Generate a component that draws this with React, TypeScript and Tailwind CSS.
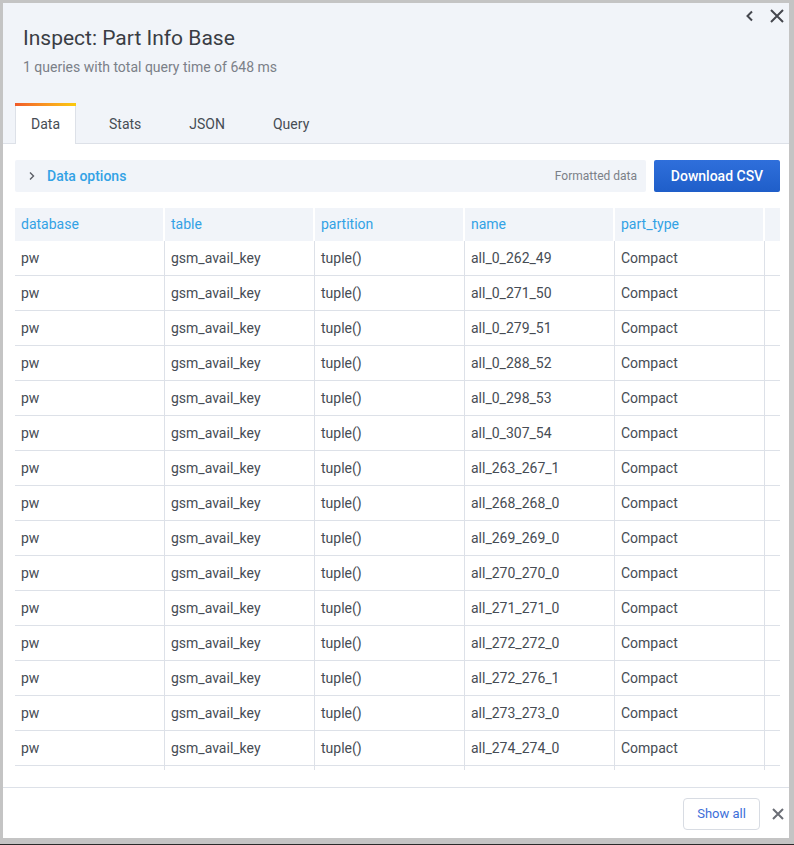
import React from "react";

const names = [
  "all_0_262_49",
  "all_0_271_50",
  "all_0_279_51",
  "all_0_288_52",
  "all_0_298_53",
  "all_0_307_54",
  "all_263_267_1",
  "all_268_268_0",
  "all_269_269_0",
  "all_270_270_0",
  "all_271_271_0",
  "all_272_272_0",
  "all_272_276_1",
  "all_273_273_0",
  "all_274_274_0",
];

const headers = ["database", "table", "partition", "name", "part_type"];

export default function App() {
  return (
    <div
      className="w-[794px] h-[845px] bg-[#c4c4c4] flex flex-col"
      style={{ fontFamily: "Roboto, 'Liberation Sans', sans-serif" }}
    >
      <div className="flex-1 pl-[3px] pt-[3px] pr-[5px] pb-[6px] flex">
        <div className="flex-1 flex flex-col bg-white">
          {/* header */}
          <div className="bg-[#f1f4f9] relative">
            <div className="absolute right-[3px] top-[4px] flex items-center gap-[10px] text-[#45474e]">
              <svg width="16" height="16" viewBox="0 0 16 16">
                <path d="M10 3.5 L5.5 8 L10 12.5" fill="none" stroke="currentColor" strokeWidth="2" />
              </svg>
              <svg width="18" height="18" viewBox="0 0 18 18">
                <path d="M3 3 L15 15 M15 3 L3 15" fill="none" stroke="currentColor" strokeWidth="2" />
              </svg>
            </div>
            <div className="pl-[20px] pt-[22px]">
              <div className="text-[21px] leading-[26px] text-[#3a3d44]">Inspect: Part Info Base</div>
              <div className="text-[14px] leading-[20px] mt-[6px] text-[#7b8088]">
                1 queries with total query time of 648 ms
              </div>
            </div>
            <div className="flex items-end pl-[12px] mt-[26px] border-b border-[#dde1e8] h-[41px]">
              <div className="relative h-[41px] -mb-px bg-white border-x border-[#dde1e8] px-[15px] flex items-center text-[14px] text-[#464c54]">
                <div className="absolute left-[-1px] right-[-1px] top-0 h-[3px] bg-gradient-to-r from-[#f05a28] to-[#fbca0a]" />
                <span className="pt-[2px]">Data</span>
              </div>
              <div className="h-[40px] px-[24px] ml-[9px] flex items-center text-[14px] text-[#464c54]">
                <span className="pt-[2px]">Stats</span>
              </div>
              <div className="h-[40px] px-[24px] flex items-center text-[14px] text-[#464c54]">
                <span className="pt-[2px]">JSON</span>
              </div>
              <div className="h-[40px] px-[24px] flex items-center text-[14px] text-[#464c54]">
                <span className="pt-[2px]">Query</span>
              </div>
            </div>
          </div>

          {/* content */}
          <div className="flex-1 flex flex-col pl-[12px] pr-[9px] pt-[16px]">
            <div className="flex items-stretch gap-[8px] h-[32px]">
              <div className="flex-1 bg-[#f1f4f9] rounded-[2px] flex items-center">
                <svg width="8" height="10" viewBox="0 0 8 10" className="ml-[13px] text-[#5b5e66]">
                  <path d="M2 1.5 L5.5 5 L2 8.5" fill="none" stroke="currentColor" strokeWidth="1.4" />
                </svg>
                <span className="ml-[11px] text-[14px] font-medium text-[#33a2e5]">Data options</span>
                <span className="ml-auto mr-[9px] text-[12px] text-[#7b8088]">Formatted data</span>
              </div>
              <div className="w-[126px] rounded-[2px] bg-gradient-to-b from-[#2f6fdb] to-[#1f5ec9] flex items-center justify-center text-white text-[14px] font-medium">
                Download CSV
              </div>
            </div>

            <div className="mt-[16px] h-[562px] overflow-hidden">
              <div className="flex h-[33px] bg-[#f1f4f9]">
                {headers.map((h) => (
                  <div
                    key={h}
                    className="w-[150px] border-r-2 border-white flex items-center px-[6px] text-[14px] text-[#33a2e5]"
                  >
                    {h}
                  </div>
                ))}
                <div className="flex-1" />
              </div>
              {names.map((n, i) => (
                <div key={i} className="flex h-[35px] border-b border-[#dde1e8]">
                  {["pw", "gsm_avail_key", "tuple()", n, "Compact"].map((c, j) => (
                    <div
                      key={j}
                      className="w-[150px] border-r border-[#dde1e8] flex items-center px-[6px] text-[14px] text-[#464c54]"
                    >
                      {c}
                    </div>
                  ))}
                  <div className="flex-1" />
                </div>
              ))}
              <div className="flex h-[35px]">
                {headers.map((h) => (
                  <div key={h} className="w-[150px] border-r border-[#dde1e8]" />
                ))}
              </div>
            </div>
            <div className="h-[17px]" />
          </div>

          {/* footer */}
          <div className="h-[51px] pt-[2px] border-t border-[#dde1e8] flex items-center justify-end pr-[4px]">
            <div className="h-[32px] w-[77px] border border-[#d8dce3] rounded-[4px] flex items-center justify-center text-[13px] text-[#3d6fd9]">
              Show all
            </div>
            <svg width="14" height="14" viewBox="0 0 14 14" className="ml-[11px] text-[#6b6e76]">
              <path d="M2 2 L12 12 M12 2 L2 12" fill="none" stroke="currentColor" strokeWidth="2" />
            </svg>
          </div>
        </div>
      </div>
      <div className="h-[3px] bg-[#2b2b2b]" />
    </div>
  );
}
